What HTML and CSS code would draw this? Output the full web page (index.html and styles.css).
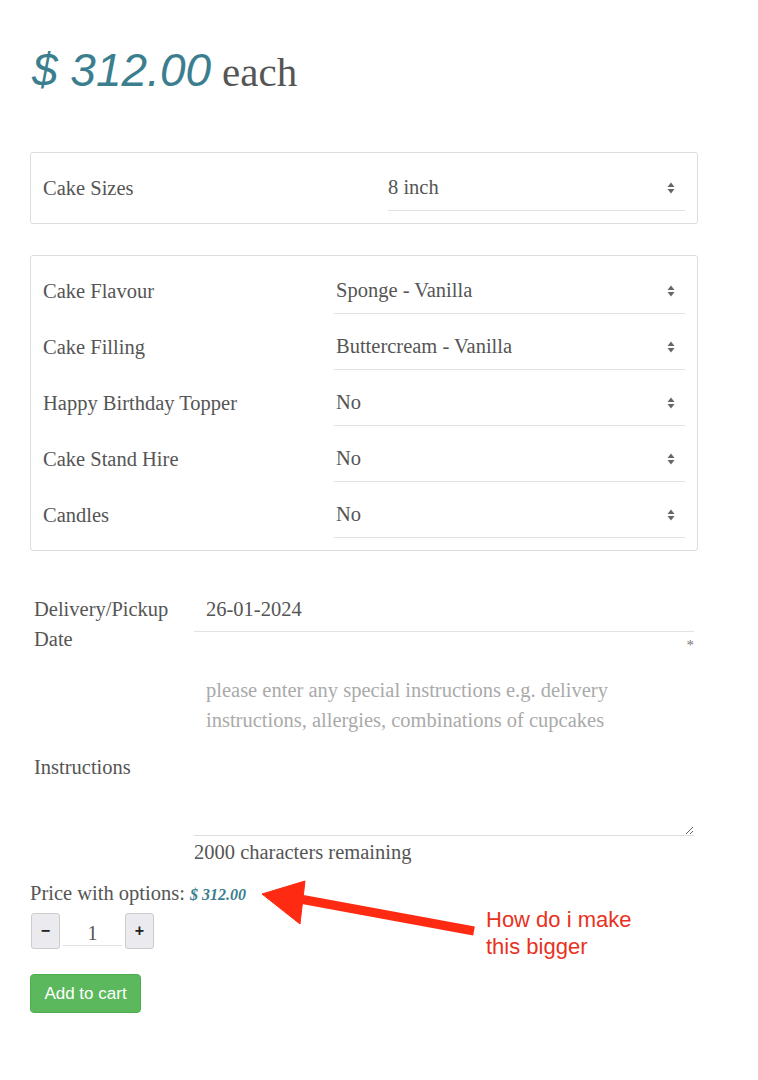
FILE: index.html
```html
<!DOCTYPE html>
<html>
<head>
<meta charset="utf-8">
<link rel="stylesheet" href="styles.css">
</head>
<body>
<div class="page">
  <div class="title"><span class="big-price">$ 312.00</span><span class="each">each</span></div>

  <div class="box box-sizes">
    <div class="label">Cake Sizes</div>
    <div class="select">8 inch<svg class="caret" width="8" height="12" viewBox="0 0 8 12"><path d="M4 0.5 L7.5 5 L0.5 5 Z M0.5 7 L7.5 7 L4 11.5 Z" fill="#666"/></svg></div>
  </div>

  <div class="box box-options">
    <div class="label">Cake Flavour</div>
    <div class="select">Sponge - Vanilla<svg class="caret" width="8" height="12" viewBox="0 0 8 12"><path d="M4 0.5 L7.5 5 L0.5 5 Z M0.5 7 L7.5 7 L4 11.5 Z" fill="#666"/></svg></div>
    <div class="label">Cake Filling</div>
    <div class="select">Buttercream - Vanilla<svg class="caret" width="8" height="12" viewBox="0 0 8 12"><path d="M4 0.5 L7.5 5 L0.5 5 Z M0.5 7 L7.5 7 L4 11.5 Z" fill="#666"/></svg></div>
    <div class="label">Happy Birthday Topper</div>
    <div class="select">No<svg class="caret" width="8" height="12" viewBox="0 0 8 12"><path d="M4 0.5 L7.5 5 L0.5 5 Z M0.5 7 L7.5 7 L4 11.5 Z" fill="#666"/></svg></div>
    <div class="label">Cake Stand Hire</div>
    <div class="select">No<svg class="caret" width="8" height="12" viewBox="0 0 8 12"><path d="M4 0.5 L7.5 5 L0.5 5 Z M0.5 7 L7.5 7 L4 11.5 Z" fill="#666"/></svg></div>
    <div class="label">Candles</div>
    <div class="select">No<svg class="caret" width="8" height="12" viewBox="0 0 8 12"><path d="M4 0.5 L7.5 5 L0.5 5 Z M0.5 7 L7.5 7 L4 11.5 Z" fill="#666"/></svg></div>
  </div>

  <div class="form-row date-row">
    <div class="form-label">Delivery/Pickup Date</div>
    <div class="form-field">
      <div class="text-input">26-01-2024</div>
      <div class="required">*</div>
    </div>
  </div>

  <div class="form-row instr-row">
    <div class="form-label instr-label">Instructions</div>
    <div class="form-field">
      <textarea class="textarea" placeholder="please enter any special instructions e.g. delivery instructions, allergies, combinations of cupcakes"></textarea>
      <div class="counter">2000 characters remaining</div>
    </div>
  </div>

  <div class="price-options">Price with options: <span class="small-price">$ 312.00</span></div>

  <div class="qty">
    <button class="qty-btn">&minus;</button>
    <div class="qty-input">1</div>
    <button class="qty-btn">+</button>
  </div>

  <button class="add-cart">Add to cart</button>

  <svg class="annot-arrow" width="230" height="60" viewBox="0 0 230 60">
    <g fill="#ff2a12" stroke="#ff2a12">
      <line x1="214" y1="51" x2="40" y2="19" stroke-width="9" stroke-linecap="butt"/>
      <polygon points="2,14 45,1 40,44" stroke-width="1" stroke-linejoin="round"/>
    </g>
  </svg>
  <div class="annot-text">How do i make<br>this bigger</div>
</div>
</body>
</html>
```

FILE: styles.css
```css
html, body {
  margin: 0;
  padding: 0;
  background: #fff;
}

.page {
  position: relative;
  width: 668px;
  padding: 40px 0 0 30px;
  font-family: "Liberation Serif", "Times New Roman", serif;
  font-size: 20.5px;
  color: #555;
}

.title {
  font-family: "Liberation Sans", Arial, sans-serif;
  font-size: 46px;
  line-height: 60px;
  height: 60px;
  margin-bottom: 52px;
  padding-left: 2px;
}

.big-price {
  font-style: italic;
  color: #3b7f8f;
}

.each {
  font-family: "Liberation Serif", "Times New Roman", serif;
  font-size: 41px;
  color: #555;
  margin-left: 11px;
}

.box {
  border: 1px solid #ddd;
  border-radius: 3px;
  padding: 12px;
  display: grid;
  row-gap: 10px;
  align-items: center;
}

.box-sizes {
  grid-template-columns: 345px 1fr;
  margin-bottom: 31px;
}

.box-options {
  grid-template-columns: 291px 1fr;
  margin-bottom: 36px;
}

.label {
  line-height: 46px;
}

.select {
  height: 45px;
  border-bottom: 1px solid #e2e2e2;
  display: flex;
  align-items: center;
  justify-content: space-between;
  padding: 0 10px 0 2px;
}

.box-sizes .select {
  padding-left: 0;
}

.caret {
  display: block;
}

.form-row {
  display: flex;
  padding: 0 4px;
}

.form-label {
  width: 160px;
  flex: none;
  line-height: 30px;
  padding-top: 7px;
}

.form-field {
  flex: 1;
}

.text-input {
  height: 44px;
  line-height: 44px;
  padding: 0 12px;
  border-bottom: 1px solid #e2e2e2;
}

.required {
  height: 22px;
  text-align: right;
  font-size: 15px;
  line-height: 26px;
  color: #777;
}

.instr-label {
  padding-top: 98px;
}

.textarea {
  display: block;
  box-sizing: border-box;
  width: 100%;
  height: 182px;
  margin: 0;
  border: none;
  border-bottom: 1px solid #ddd;
  padding: 21px 12px 0;
  font-family: "Liberation Serif", "Times New Roman", serif;
  font-size: 20.5px;
  line-height: 30px;
  color: #555;
  background: transparent;
  resize: vertical;
  outline: none;
}

.textarea::placeholder {
  color: #aaa;
}

.counter {
  line-height: 32px;
}

.price-options {
  line-height: 30px;
  margin-top: 10px;
}

.small-price {
  color: #3b7f8f;
  font-style: italic;
  font-weight: bold;
  font-size: 16px;
}

.qty {
  display: flex;
  align-items: flex-start;
  margin-top: 3px;
  margin-left: 1px;
  gap: 3px;
}

.qty-btn {
  width: 29px;
  height: 36px;
  margin: 0;
  padding: 0;
  border: 1px solid #ccc;
  border-radius: 3px;
  background: #ebebef;
  color: #222;
  font-family: "Liberation Sans", Arial, sans-serif;
  font-size: 16px;
  font-weight: bold;
  line-height: 32px;
}

.qty-input {
  width: 59px;
  height: 30px;
  margin-top: 2px;
  border-bottom: 1px solid #e2e2e2;
  text-align: center;
  line-height: 36px;
  font-size: 20px;
  color: #555;
}

.add-cart {
  display: block;
  margin: 25px 0 0 0;
  width: 111px;
  height: 39px;
  border: 1px solid #4cae4c;
  border-radius: 4px;
  background: #5cb85c;
  color: #fff;
  font-family: "Liberation Sans", Arial, sans-serif;
  font-size: 17px;
  padding: 0;
}

.annot-arrow {
  position: absolute;
  left: 260px;
  top: 880px;
}

.annot-text {
  position: absolute;
  left: 486px;
  top: 906px;
  font-family: "Liberation Sans", Arial, sans-serif;
  font-size: 22px;
  line-height: 27px;
  color: #e8321e;
}
```
